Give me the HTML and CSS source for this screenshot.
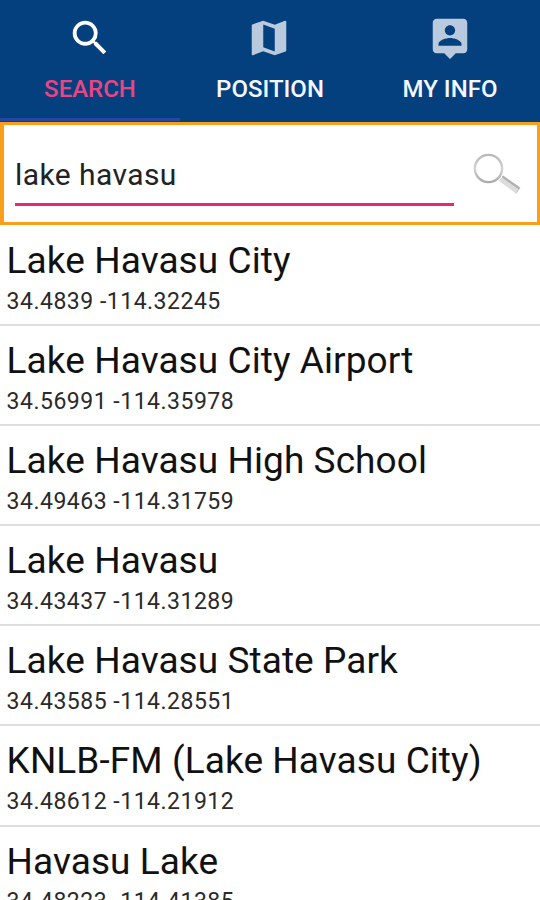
FILE: index.html
```html
<!DOCTYPE html>
<html lang="en">
<head>
    <meta charset="UTF-8">
    <meta name="viewport" content="width=device-width, initial-scale=1.0">
    <title>Search</title>
    <link rel="stylesheet" href="styles.css">
</head>
<body>
    <!-- Tabs -->
    <nav class="tabs">
        <a class="tab active">
            <svg class="tab-icon" viewBox="0 0 24 24"><path d="M15.5 14h-.79l-.28-.27A6.471 6.471 0 0 0 16 9.5 6.5 6.5 0 1 0 9.5 16c1.61 0 3.09-.59 4.23-1.57l.27.28v.79l5 4.99L20.49 19l-4.99-5zm-6 0C7.01 14 5 11.99 5 9.5S7.01 5 9.5 5 14 7.01 14 9.5 11.99 14 9.5 14z"/></svg>
            <span class="tab-label">SEARCH</span>
        </a>
        <a class="tab">
            <svg class="tab-icon map" viewBox="0 0 24 24"><path d="M20.5 3l-.16.03L15 5.1 9 3 3.36 4.9c-.21.07-.36.25-.36.48V20.5c0 .28.22.5.5.5l.16-.03L9 18.9l6 2.1 5.64-1.9c.21-.07.36-.25.36-.48V3.5c0-.28-.22-.5-.5-.5zM15 19l-6-2.11V5l6 2.11V19z"/></svg>
            <span class="tab-label">POSITION</span>
        </a>
        <a class="tab">
            <svg class="tab-icon" viewBox="0 0 24 24"><path d="M19 2H5c-1.11 0-2 .9-2 2v14c0 1.1.89 2 2 2h4l3 3 3-3h4c1.1 0 2-.9 2-2V4c0-1.1-.9-2-2-2zm-7 3.3c1.49 0 2.7 1.21 2.7 2.7 0 1.49-1.21 2.7-2.7 2.7-1.49 0-2.7-1.21-2.7-2.7 0-1.49 1.21-2.7 2.7-2.7zM18 16H6v-.9c0-2 4-3.1 6-3.1s6 1.1 6 3.1v.9z"/></svg>
            <span class="tab-label">MY INFO</span>
        </a>
    </nav>

    <!-- Search box -->
    <div class="search-box">
        <input type="text" class="search-input" value="lake havasu">
        <svg class="search-icon" viewBox="0 0 48 42">
            <defs>
                <linearGradient id="ring" x1="0" y1="0" x2="0" y2="1">
                    <stop offset="0" stop-color="#b9b9b9"/>
                    <stop offset="0.5" stop-color="#d2d2d2"/>
                    <stop offset="1" stop-color="#aaaaaa"/>
                </linearGradient>
            </defs>
            <circle cx="15.5" cy="15.5" r="13.6" fill="none" stroke="url(#ring)" stroke-width="2.4"/>
            <path d="M30 22.5L47 34.5 43 40.5 26 28z" fill="#dcdcdc"/>
            <path d="M30 22.5L47 34.5 46 36.5 29 24.5z" fill="#b0b0b0"/>
            <path d="M47 34.5L43 40.5" stroke="#c4c4c4"/>
        </svg>
    </div>

    <!-- Results -->
    <ul class="results">
        <li class="result"><div class="name">Lake Havasu City</div><div class="coords">34.4839 -114.32245</div></li>
        <li class="result"><div class="name">Lake Havasu City Airport</div><div class="coords">34.56991 -114.35978</div></li>
        <li class="result"><div class="name">Lake Havasu High School</div><div class="coords">34.49463 -114.31759</div></li>
        <li class="result"><div class="name">Lake Havasu</div><div class="coords">34.43437 -114.31289</div></li>
        <li class="result"><div class="name">Lake Havasu State Park</div><div class="coords">34.43585 -114.28551</div></li>
        <li class="result"><div class="name">KNLB-FM (Lake Havasu City)</div><div class="coords">34.48612 -114.21912</div></li>
        <li class="result"><div class="name">Havasu Lake</div><div class="coords">34.48223 -114.41385</div></li>
    </ul>
</body>
</html>
```

FILE: styles.css
```css
body {
    font-family: Roboto, sans-serif;
    background-color: #ffffff;
    color: #111;
    margin: 0;
    height: 100vh;
    overflow: hidden;
    display: flex;
    flex-direction: column;
}

.tabs {
    display: flex;
    flex-shrink: 0;
    box-sizing: border-box;
    height: 122px;
    padding-bottom: 1px;
    background-color: #043f7e;
}

.tab {
    flex: 1;
    display: flex;
    flex-direction: column;
    align-items: center;
    box-sizing: border-box;
    padding-top: 15px;
    border-bottom: 3px solid transparent;
    color: #f4f7ff;
}

.tab.active {
    border-bottom-color: #2446a4;
}

.tab-icon {
    width: 46px;
    height: 46px;
    fill: #b9cade;
}

.tab-icon.map {
    margin-right: 3px;
}

.active .tab-icon {
    fill: #ffffff;
}

.tab-label {
    margin-top: 14px;
    font-size: 24px;
    line-height: 28px;
    font-weight: 500;
}

.active .tab-label {
    color: #ea4482;
}

.search-box {
    display: flex;
    flex-shrink: 0;
    box-sizing: border-box;
    height: 103px;
    padding: 28px 16px 0 11px;
    border: 3px solid #fa9f1b;
    border-left-width: 4px;
    justify-content: space-between;
}

.search-input {
    box-sizing: border-box;
    width: 439px;
    height: 53px;
    padding: 0 0 8px;
    border: none;
    border-bottom: 3px solid #ec2670;
    outline: none;
    font-family: Roboto, sans-serif;
    font-size: 30px;
    letter-spacing: 0.42px;
    color: #222;
}

.search-icon {
    width: 48px;
    height: 42px;
}

.results {
    list-style: none;
    margin: 0;
    padding: 1px 0 0;
}

.result {
    box-sizing: border-box;
    height: 100.1px;
    padding: 13px 6.6px 0;
    border-bottom: 2px solid #dedede;
}

.name {
    font-size: 37px;
    line-height: 44px;
    letter-spacing: 0.08px;
    white-space: nowrap;
}

.coords {
    margin-top: 4.5px;
    font-size: 23px;
    line-height: 28px;
    letter-spacing: 0.5px;
    color: #2a2a2a;
}
```
